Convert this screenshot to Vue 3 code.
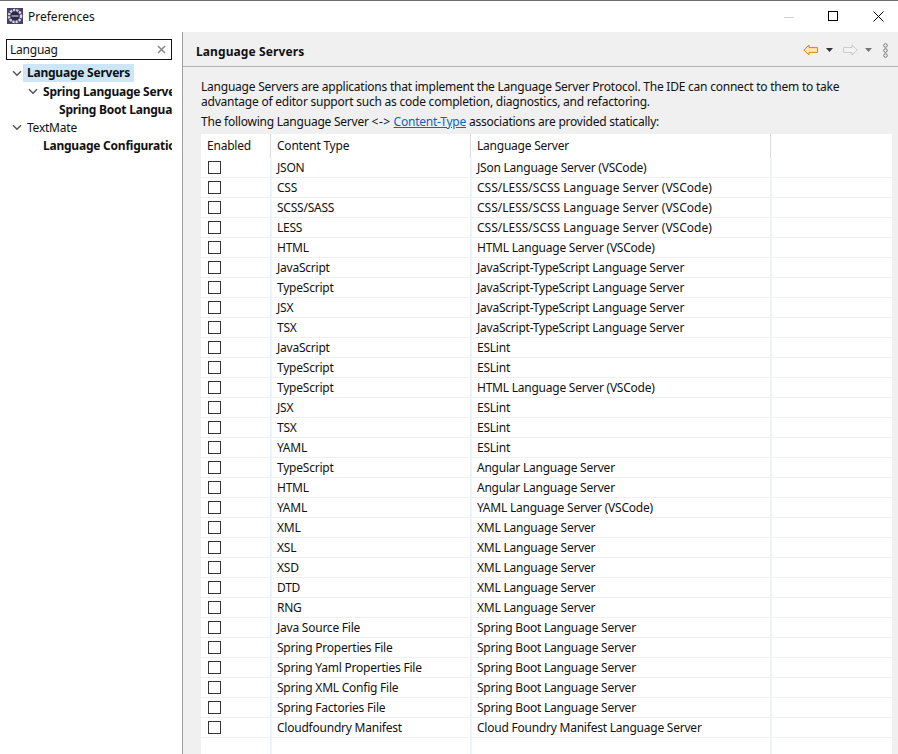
<script setup>
const rows = [
  ['JSON','JSon Language Server (VSCode)'],
  ['CSS','CSS/LESS/SCSS Language Server (VSCode)'],
  ['SCSS/SASS','CSS/LESS/SCSS Language Server (VSCode)'],
  ['LESS','CSS/LESS/SCSS Language Server (VSCode)'],
  ['HTML','HTML Language Server (VSCode)'],
  ['JavaScript','JavaScript-TypeScript Language Server'],
  ['TypeScript','JavaScript-TypeScript Language Server'],
  ['JSX','JavaScript-TypeScript Language Server'],
  ['TSX','JavaScript-TypeScript Language Server'],
  ['JavaScript','ESLint'],
  ['TypeScript','ESLint'],
  ['TypeScript','HTML Language Server (VSCode)'],
  ['JSX','ESLint'],
  ['TSX','ESLint'],
  ['YAML','ESLint'],
  ['TypeScript','Angular Language Server'],
  ['HTML','Angular Language Server'],
  ['YAML','YAML Language Server (VSCode)'],
  ['XML','XML Language Server'],
  ['XSL','XML Language Server'],
  ['XSD','XML Language Server'],
  ['DTD','XML Language Server'],
  ['RNG','XML Language Server'],
  ['Java Source File','Spring Boot Language Server'],
  ['Spring Properties File','Spring Boot Language Server'],
  ['Spring Yaml Properties File','Spring Boot Language Server'],
  ['Spring XML Config File','Spring Boot Language Server'],
  ['Spring Factories File','Spring Boot Language Server'],
  ['Cloudfoundry Manifest','Cloud Foundry Manifest Language Server'],
]
const tree = [
  { label: 'Language Servers', level: 0, arrow: true, bold: true, selected: true },
  { label: 'Spring Language Servers', level: 1, arrow: true, bold: true },
  { label: 'Spring Boot Language Server', level: 2, bold: true },
  { label: 'TextMate', level: 0, arrow: true },
  { label: 'Language Configuration', level: 1, bold: true },
]
</script>

<template>
  <div class="window">
    <header class="titlebar">
      <svg class="appicon" width="16" height="16" viewBox="0 0 16 16">
        <rect width="16" height="16" fill="#4a3f6b"/>
        <circle cx="8" cy="8" r="6" fill="none" stroke="#d8d8de" stroke-width="2.4" stroke-dasharray="2.2 1"/>
        <circle cx="8" cy="8" r="4.4" fill="#2c2848"/>
        <rect x="4.5" y="7.4" width="7" height="1.2" fill="#c9c9d6"/>
      </svg>
      <span class="title">Preferences</span>
      <div class="winbtns">
        <svg width="12" height="12" viewBox="0 0 12 12" class="wmin"><path d="M1 6.500h10" stroke="#cfcfcf" fill="none"/></svg>
        <svg width="12" height="12" viewBox="0 0 12 12" class="wmax"><rect x=".5" y=".5" width="9" height="9" fill="none" stroke="#000"/></svg>
        <svg width="12" height="12" viewBox="0 0 12 12" class="wclose"><path d="M.5 .5l10 10M10.500 .5l-10 10" stroke="#000" fill="none"/></svg>
      </div>
    </header>
    <div class="body">
      <aside class="side">
        <div class="search">
          <span>Languag</span>
          <svg width="9" height="9" viewBox="0 0 9 9"><path d="M1 1l7 7M8 1l-7 7" stroke="#8a8a8a" stroke-width="1.6" fill="none"/></svg>
        </div>
        <ul class="tree">
          <li v-for="n in tree" :key="n.label" class="node" :class="'lv' + n.level">
            <svg v-if="n.arrow" class="twisty" width="10" height="7" viewBox="0 0 10 7"><path d="M1 1.200l4 4 4-4" stroke="#555" stroke-width="1.5" fill="none"/></svg>
            <span v-else class="twisty-gap"></span>
            <span class="lbl" :class="{ bold: n.bold, sel: n.selected }">{{ n.label }}</span>
          </li>
        </ul>
      </aside>
      <main class="main">
        <div class="head">
          <h1>Language Servers</h1>
          <div class="tools">
            <svg width="16" height="12" viewBox="0 0 16 12"><path d="M.8 6L6 1v2.600h8.500v4.800H6V11z" fill="#ffe9a8" stroke="#c98a12"/></svg>
            <svg class="drop" width="7" height="4" viewBox="0 0 7 4"><path d="M0 0h7L3.500 4z" fill="#333"/></svg>
            <svg class="fwd" width="16" height="12" viewBox="0 0 16 12"><path d="M15.200 6L10 1v2.600H1.500v4.800H10V11z" fill="#f4f4f4" stroke="#c8c8c8"/></svg>
            <svg class="drop" width="7" height="4" viewBox="0 0 7 4"><path d="M0 0h7L3.500 4z" fill="#777"/></svg>
            <svg class="dots" width="5" height="15" viewBox="0 0 5 15"><g fill="none" stroke="#777"><circle cx="2.500" cy="2.500" r="1.800"/><circle cx="2.500" cy="7.500" r="1.800"/><circle cx="2.500" cy="12.500" r="1.800"/></g></svg>
          </div>
        </div>
        <div class="content">
          <p class="desc">Language Servers are applications that implement the Language Server Protocol. The IDE can connect to them to take<br>advantage of editor support such as code completion, diagnostics, and refactoring.</p>
          <p class="assoc">The following Language Server <span class="arrow">&lt;-&gt;</span> <a>Content-Type</a> associations are provided statically:</p>
          <div class="table">
            <div class="row hdr">
              <div class="c c1"><span>Enabled</span></div>
              <div class="c c2"><span>Content Type</span></div>
              <div class="c c3"><span>Language Server</span></div>
              <div class="c c4"></div>
            </div>
            <div class="row" v-for="(r, i) in rows" :key="i">
              <div class="c c1"><span class="check"></span></div>
              <div class="c c2">{{ r[0] }}</div>
              <div class="c c3" :class="{ caps: r[1].startsWith('CSS/') }">{{ r[1] }}</div>
              <div class="c c4"></div>
            </div>
            <div class="row tail">
              <div class="c c1"></div><div class="c c2"></div><div class="c c3"></div><div class="c c4"></div>
            </div>
          </div>
        </div>
      </main>
    </div>
  </div>
</template>

<style>
html, body { margin: 0; overflow: hidden; }
</style>

<style scoped>
.window {
  width: 898px; height: 754px; overflow: hidden; background: #fff; color: #111;
  font: 12px/17px "Noto Sans", "Noto Sans CJK KR", sans-serif;
  letter-spacing: -0.23px;
  display: flex; flex-direction: column; box-sizing: border-box; border-top: 1px solid #6e6e6e;
}
.titlebar { height: 31px; flex: none; display: flex; align-items: center; padding-left: 7px; padding-bottom: 1px; box-sizing: border-box; }
.appicon { margin-right: 5px; }
.title { letter-spacing: 0; }
.winbtns { margin-left: auto; display: flex; align-items: center; padding-top: 2px; }
.wmin { margin-right: 33px; }
.wmax { margin-right: 33px; width: 12px; }
.wclose { margin-right: 13px; }
.body { flex: 1; display: flex; min-height: 0; }
.side { flex: none; border-right: 1px solid #a0a0a0; padding: 7px 0 0 6px; width: 176px; }
.search {
  width: 166px; height: 21px; box-sizing: border-box; border: 1px solid #111;
  display: flex; align-items: center; justify-content: space-between; padding: 0 5px 0 3px;
}
.tree { list-style: none; margin: 4px 0 0; padding: 0; width: 166px; overflow: hidden; }
.node { height: 18px; display: flex; align-items: center; white-space: nowrap; }
.lv0 { padding-left: 6px; }
.lv1 { padding-left: 22px; }
.lv2 { padding-left: 38px; }
.twisty { flex: none; margin-right: 5px; }
.twisty-gap { flex: none; width: 15px; }
.lbl.bold { font-weight: 700; }
.lbl.sel { background: #cde6f7; padding: 0 4px; margin-left: -4px; line-height: 18px; }
.main { flex: 1; min-width: 0; background: #f0f0f0; display: flex; flex-direction: column; }
.head { height: 35px; flex: none; box-sizing: border-box; border-bottom: 1px solid #b4b4b4; display: flex; align-items: center; padding: 0 9px 0 13px; }
h1 { font-size: 12px; font-weight: 700; margin: 5px 0 0; line-height: 17px; letter-spacing: 0.1px; }
.tools { margin: 2px 1px 0 auto; display: flex; align-items: center; }
.drop { margin: 0 0 0 7px; }
.fwd { margin-left: 9px; }
.dots { margin-left: 11px; }
.content { flex: 1; min-height: 0; padding: 12px 6px 0 18px; }
.desc { margin: 0; line-height: 15px; white-space: nowrap; }
.assoc { margin: 5px 0 0; line-height: 15px; white-space: nowrap; }
.arrow { letter-spacing: 0.5px; }
.assoc a { color: #0a64c8; text-decoration: underline; }
.table { margin-top: 5px; background: #fff; }
.row { display: flex; height: 20px; box-sizing: border-box; border-bottom: 1px solid #f0f0f0; }
.row.hdr { height: 24px; border-bottom: 0; }
.hdr .c span { margin-top: -2px; }
.c { box-sizing: border-box; height: 100%; padding-left: 5px; white-space: nowrap; display: flex; align-items: center; border-right: 2px solid #eef2fa; }
.c3.caps { letter-spacing: 0; }
.hdr .c { border-right: 0; box-shadow: inset -1px 0 #fff, inset -2px 0 #dcdcdc; }
.hdr .c1 { padding-left: 6px; }
.hdr .c4 { box-shadow: none; }
.c1 { width: 71px; }
.c2 { width: 200px; }
.c3 { width: 300px; }
.c4 { flex: 1; border-right: 0; }
.check { width: 13px; height: 13px; box-sizing: border-box; border: 1px solid #333; margin-left: 2px; background: #fff; }
.tail { height: 40px; border-bottom: 0; }
</style>
